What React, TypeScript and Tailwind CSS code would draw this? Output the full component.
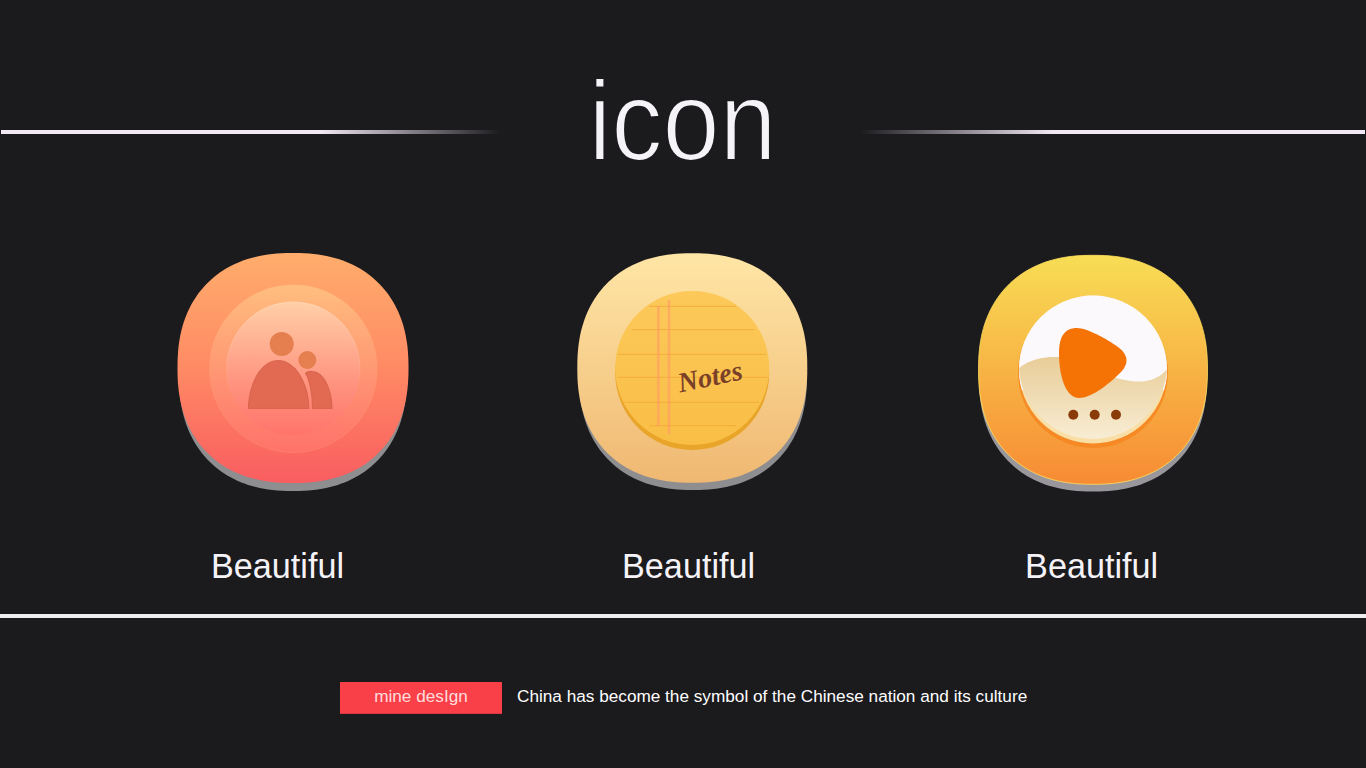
// ── Squircle outline (superellipse) used by all three icons ──────────────────
function squircle(cx: number, cy: number, rx: number, ry: number, n = 2.3) {
  const pts: string[] = [];
  for (let i = 0; i < 180; i++) {
    const a = (i / 180) * Math.PI * 2;
    const c = Math.cos(a);
    const s = Math.sin(a);
    const x = cx + rx * Math.sign(c) * Math.pow(Math.abs(c), 2 / n);
    const y = cy + ry * Math.sign(s) * Math.pow(Math.abs(s), 2 / n);
    pts.push(`${x.toFixed(2)} ${y.toFixed(2)}`);
  }
  return `M${pts.join("L")}Z`;
}

function PeopleIcon() {
  return (
    <svg width="270" height="260" viewBox="0 0 270 260" className="shrink-0">
      <defs>
        <linearGradient id="p-base" x1="0" y1="0" x2="0" y2="1">
          <stop offset="0" stopColor="#ffad6c" />
          <stop offset="0.5" stopColor="#ff8a64" />
          <stop offset="1" stopColor="#f95d60" />
        </linearGradient>
        <linearGradient id="p-ring" x1="0" y1="0" x2="0" y2="1">
          <stop offset="0" stopColor="#ffbe7e" />
          <stop offset="1" stopColor="#ff726a" />
        </linearGradient>
        <linearGradient id="p-disc" x1="0" y1="0" x2="0" y2="1">
          <stop offset="0" stopColor="#ffcfa8" />
          <stop offset="0.6" stopColor="#ff9480" />
          <stop offset="1" stopColor="#ff746b" />
        </linearGradient>
        <linearGradient id="p-edge" x1="0" y1="0" x2="0" y2="1">
          <stop offset="0" stopColor="#ffe3cd" stopOpacity="0.6" />
          <stop offset="0.7" stopColor="#ffe3cd" stopOpacity="0" />
        </linearGradient>
      </defs>
      <path d={squircle(133, 135, 114, 116)} fill="#8e8d8f" />
      <path d={squircle(133, 128, 115.5, 115)} fill="url(#p-base)" />
      <circle cx="133.3" cy="128.5" r="84" fill="url(#p-ring)" stroke="#ffa072" strokeOpacity="0.5" strokeWidth="0.6" />
      <circle cx="133.3" cy="128.7" r="66.7" fill="url(#p-disc)" stroke="url(#p-edge)" strokeWidth="0.8" />
      <circle cx="121.7" cy="104" r="12" fill="#e57f50" />
      <circle cx="147.3" cy="120" r="9" fill="#e57f50" />
      <path
        d="M88.6 168.4V164C91 139 103 120.5 118 120.5C135 120.5 147 142 148.6 164V168.4Z"
        fill="#e26a52"
        stroke="#d9664c"
        strokeWidth="1.2"
        strokeLinejoin="round"
      />
      <path
        d="M145.5 133.5C149 138 152.5 152 152.6 168.4H172C171.5 150 164 131.5 152 131.5C149 131.3 147 131.8 145.5 133.5Z"
        fill="#e26a52"
        stroke="#d9664c"
        strokeWidth="1.2"
        strokeLinejoin="round"
      />
    </svg>
  );
}

function NotesIcon() {
  const rules = [
    { y: 66.3, x1: 89.3, x2: 176 },
    { y: 89.7, x1: 71.7, x2: 194.3 },
    { y: 114.3, x1: 57.7, x2: 206 },
    { y: 137.3, x1: 57.7, x2: 208 },
    { y: 162.3, x1: 63.3, x2: 199 },
    { y: 185.7, x1: 89.3, x2: 176 },
  ];
  return (
    <svg width="270" height="260" viewBox="0 0 270 260" className="shrink-0">
      <defs>
        <linearGradient id="n-base" x1="0" y1="0" x2="0" y2="1">
          <stop offset="0" stopColor="#ffe6a6" />
          <stop offset="1" stopColor="#efb872" />
        </linearGradient>
        <linearGradient id="n-disc" x1="0" y1="0" x2="0" y2="1">
          <stop offset="0" stopColor="#fcc95a" />
          <stop offset="1" stopColor="#f9be45" />
        </linearGradient>
      </defs>
      <path d={squircle(133, 135, 114, 115)} fill="#8e8d8f" />
      <path d={squircle(132.3, 128, 115, 114.7)} fill="url(#n-base)" />
      <circle cx="132.2" cy="133" r="77" fill="#e9a529" />
      <circle cx="132.2" cy="128" r="77" fill="url(#n-disc)" />
      {rules.map((r) => (
        <line key={r.y} x1={r.x1} y1={r.y} x2={r.x2} y2={r.y} stroke="#f3ad3a" strokeWidth="1" />
      ))}
      <line x1="98.3" y1="66" x2="98.3" y2="186" stroke="#ff9a68" strokeOpacity="0.6" strokeWidth="2.5" />
      <line x1="109" y1="60" x2="109" y2="194" stroke="#ff9a68" strokeOpacity="0.6" strokeWidth="2.5" />
      <text
        x="150"
        y="146"
        textAnchor="middle"
        transform="rotate(-12 150 137)"
        fill="#7b4128"
        className="font-['Liberation_Serif',serif] text-[28px] font-bold italic"
      >
        Notes
      </text>
    </svg>
  );
}

function VideoIcon() {
  return (
    <svg width="270" height="260" viewBox="0 0 270 260" className="shrink-0">
      <defs>
        <linearGradient id="v-base" x1="0" y1="0" x2="0" y2="1">
          <stop offset="0" stopColor="#f8dd55" />
          <stop offset="1" stopColor="#f78b34" />
        </linearGradient>
        <linearGradient id="v-wave" x1="0" y1="0" x2="0" y2="1">
          <stop offset="0" stopColor="#e8cd98" />
          <stop offset="1" stopColor="#f8edd4" />
        </linearGradient>
        <clipPath id="v-top">
          <circle cx="133" cy="129.5" r="74" />
        </clipPath>
        <clipPath id="v-low">
          <circle cx="133" cy="125" r="74" />
        </clipPath>
      </defs>
      <path d={squircle(133, 136.5, 114, 115)} fill="#9a979c" />
      <path d={squircle(133, 129.8, 114.5, 114.5)} fill="url(#v-base)" stroke="#ffdf5c" strokeWidth="0.8" />
      <circle cx="133" cy="133" r="75" fill="#f5851f" fillOpacity="0.8" />
      <circle cx="133" cy="129.5" r="74" fill="#f9dfa6" />
      <rect x="59" y="55" width="148" height="95" fill="#fbf9fc" clipPath="url(#v-top)" />
      <g clipPath="url(#v-low)">
        <path
          d="M59 128C72 118 85 116.5 100 117C128 118 142 139 175 141.5C190 142.5 201 137 208 128V200H59Z"
          fill="url(#v-wave)"
        />
      </g>
      <path
        d="M99 113C99 96 105 88 117 88C127 88 147 99 158 107C170 116 168 125 160 133C148 145 131 158 119 158C106 158 99 137 99 113Z"
        fill="#f57205"
      />
      <circle cx="113.3" cy="174.7" r="5" fill="#8a3b0a" />
      <circle cx="134.7" cy="174.7" r="5" fill="#8a3b0a" />
      <circle cx="156" cy="174.7" r="5" fill="#8a3b0a" />
    </svg>
  );
}

export default function App() {
  return (
    <div className="flex h-[768px] w-full flex-col overflow-hidden bg-[#1b1a1d] font-['Liberation_Sans',Arial,sans-serif] text-[#f5f3f7]">
      {/* ── Title: background-coloured stroke thins the regular weight down to a light one ── */}
      <div className="mt-[72px] flex h-[120px] items-center pl-px pr-px">
        <div className="h-[4px] w-[500px] shrink-0 bg-linear-to-r from-[#f0e8f5] from-64% to-transparent" />
        <h1 className="flex-1 pb-[23px] pl-[4px] text-center text-[114px] leading-none font-normal">
          <span className="inline-block scale-x-[0.9] [-webkit-text-stroke:2.2px_#1b1a1d]">icon</span>
        </h1>
        <div className="h-[4px] w-[505px] shrink-0 bg-linear-to-l from-[#f0e8f5] from-62% to-transparent" />
      </div>

      {/* ── Icons ── */}
      <div className="mt-[48px] flex gap-[130px] pl-[160px]">
        <PeopleIcon />
        <NotesIcon />
        <VideoIcon />
      </div>

      {/* ── Labels ── */}
      <div className="mt-[46px] flex pl-[211px] text-[34.2px] leading-[40px]">
        <span>Beautiful</span>
        <span className="ml-[278px]">Beautiful</span>
        <span className="ml-[270px]">Beautiful</span>
      </div>

      <div className="mt-[28px] h-[4px] w-full bg-[#efecf2]" />

      {/* ── Footer ── */}
      <div className="mt-[64px] flex items-start pl-[340px]">
        <div className="flex h-[32px] w-[162px] items-center justify-center border-b border-[#d8383f] bg-[#f94048] pb-px text-[17.2px] text-[#ffdcdc]">mine desIgn</div>
        <p className="ml-[15px] pt-[2px] text-[17.2px] text-white">China has become the symbol of the Chinese nation and its culture</p>
      </div>
    </div>
  );
}
